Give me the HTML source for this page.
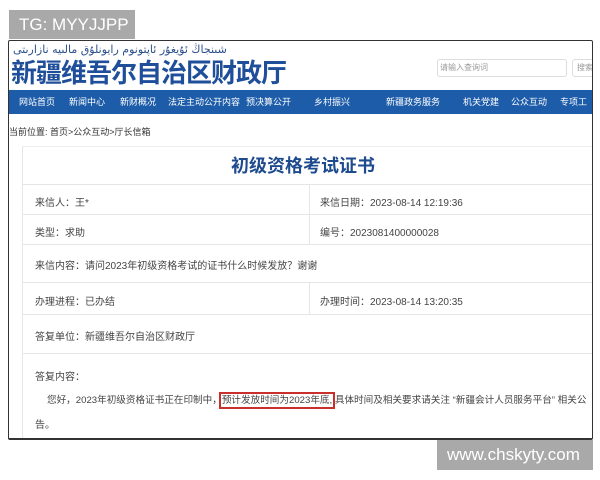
<!DOCTYPE html>
<html><head><meta charset="utf-8"><style>
*{margin:0;padding:0;box-sizing:border-box}
body{width:600px;height:480px;background:#fff;position:relative;overflow:hidden;font-family:"Liberation Sans","Noto Sans CJK SC",sans-serif;color:#333}
.a{position:absolute}
.tg{left:9px;top:10px;width:126px;height:29px;background:#a9a9a9;color:#fff;font-size:17px;line-height:29px;padding-left:10px}
.www{left:437px;top:440px;width:156px;height:30px;background:#a9a9a9;color:#fff;font-size:17px;line-height:30px;padding-left:10px}
.shot{left:8px;top:40px;width:585px;height:400px;border:1px solid #333;border-bottom:2px solid #333;overflow:hidden;border-radius:2px}
.nav{left:0;top:49px;width:585px;height:24px;background:#1d5ca8;color:#fff;font-size:9px;line-height:24px}
.nav span{position:absolute;top:0}
.tb{left:13px;top:105px;width:580px;height:300px;border-left:1px solid #e6e6e6}
.row{position:absolute;left:0;width:580px;border-top:1px solid #e6e6e6;font-size:10px;color:#444}
.row span{position:absolute}
.vd{position:absolute;left:286px;width:1px;background:#e6e6e6}
</style></head><body>
<div class="a tg">TG: MYYJJPP</div>
<div class="a shot">
 <div class="a" style="left:4px;top:2px;font-size:11px;color:#2a4f8a;font-family:'DejaVu Sans',sans-serif">شىنجاڭ ئۇيغۇر ئاپتونوم رايونلۇق مالىيە نازارىتى</div>
 <div class="a" style="left:2px;top:12px;font-size:26px;font-weight:bold;color:#1f4f9a;letter-spacing:-1px">新疆维吾尔自治区财政厅</div>
 <div class="a" style="left:428px;top:18px;width:130px;height:18px;border:1px solid #ddd;border-radius:3px;font-size:8px;color:#999;line-height:16px;padding-left:2px">请输入查询词</div>
 <div class="a" style="left:563px;top:18px;width:30px;height:18px;border:1px solid #ddd;border-radius:3px;font-size:8px;color:#999;line-height:16px;padding-left:4px">搜索</div>
 <div class="a nav"><span style="left:10px">网站首页</span><span style="left:60px">新闻中心</span><span style="left:111px">新财概况</span><span style="left:159px">法定主动公开内容</span><span style="left:237px">预决算公开</span><span style="left:305px">乡村振兴</span><span style="left:377px">新疆政务服务</span><span style="left:454px">机关党建</span><span style="left:502px">公众互动</span><span style="left:551px">专项工作</span></div>
 <div class="a" style="left:0;top:84px;font-size:9px;color:#333">当前位置: 首页&gt;公众互动&gt;厅长信箱</div>
 <div class="a tb">
  <div class="row" style="top:0;height:38px;border-top-color:#eee"><span style="left:0;width:560px;text-align:center;top:5px;font-size:18px;font-weight:bold;color:#1e4b8e">初级资格考试证书</span></div>
  <div class="row" style="top:38px;height:30px"><span style="left:12px;top:9px">来信人：王*</span><span style="left:297px;top:9px">来信日期：2023-08-14 12:19:36</span></div>
  <div class="row" style="top:68px;height:30px"><span style="left:12px;top:9px">类型：求助</span><span style="left:297px;top:9px">编号：2023081400000028</span></div>
  <div class="row" style="top:98px;height:38px"><span style="left:12px;top:12px">来信内容：请问2023年初级资格考试的证书什么时候发放？谢谢</span></div>
  <div class="row" style="top:136px;height:32px"><span style="left:12px;top:10px">办理进程：已办结</span><span style="left:297px;top:10px">办理时间：2023-08-14 13:20:35</span></div>
  <div class="vd" style="top:38px;height:60px"></div>
  <div class="vd" style="top:136px;height:32px"></div>
  <div class="row" style="top:168px;height:39px"><span style="left:12px;top:13px">答复单位：新疆维吾尔自治区财政厅</span></div>
  <div class="row" style="top:207px;height:100px">
   <span style="left:12px;top:14px">答复内容：</span>
   <span style="left:24px;top:38px;white-space:nowrap;font-size:9.6px">您好，2023年初级资格证书正在印制中，<span style="position:relative;outline:2px solid #c9302c;outline-offset:1px">预计发放时间为2023年底,</span> 具体时间及相关要求请关注 “新疆会计人员服务平台” 相关公</span>
   <span style="left:12px;top:62px">告。</span>
  </div>
 </div>
</div>
<div class="a www">www.chskyty.com</div>
</body></html>
